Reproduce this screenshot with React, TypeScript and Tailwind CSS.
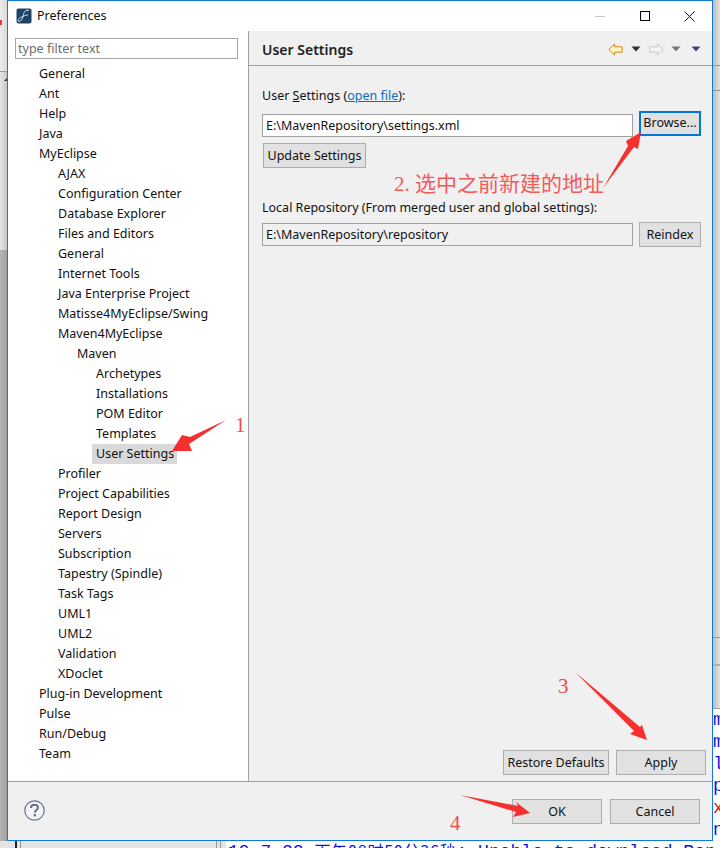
import React from 'react';

const uiFont = { fontFamily: '"Noto Sans", "Open Sans", sans-serif' };

// label + indent level, top to bottom
const treeRows: [string, number][] = [
  ['General', 0],
  ['Ant', 0],
  ['Help', 0],
  ['Java', 0],
  ['MyEclipse', 0],
  ['AJAX', 1],
  ['Configuration Center', 1],
  ['Database Explorer', 1],
  ['Files and Editors', 1],
  ['General', 1],
  ['Internet Tools', 1],
  ['Java Enterprise Project', 1],
  ['Matisse4MyEclipse/Swing', 1],
  ['Maven4MyEclipse', 1],
  ['Maven', 2],
  ['Archetypes', 3],
  ['Installations', 3],
  ['POM Editor', 3],
  ['Templates', 3],
  ['User Settings', 3],
  ['Profiler', 1],
  ['Project Capabilities', 1],
  ['Report Design', 1],
  ['Servers', 1],
  ['Subscription', 1],
  ['Tapestry (Spindle)', 1],
  ['Task Tags', 1],
  ['UML1', 1],
  ['UML2', 1],
  ['Validation', 1],
  ['XDoclet', 1],
  ['Plug-in Development', 0],
  ['Pulse', 0],
  ['Run/Debug', 0],
  ['Team', 0],
];

const indentClass = ['pl-[31px]', 'pl-[50px]', 'pl-[69px]', 'pl-[88px]'];

function Btn({ label, className = '' }: { label: string; className?: string }) {
  return (
    <button className={`flex items-center justify-center pt-[2px] bg-[#e1e1e1] border border-[#adadad] text-[12.5px] text-[#111] ${className}`}>
      {label}
    </button>
  );
}

function Logo() {
  return (
    <svg width="16" height="16" viewBox="0 0 16 16">
      <rect x="0.5" y="0.5" width="15" height="15" rx="2" fill="#1d4468" />
      <path d="M13 2.5C10 1.5 8 3.5 7.5 6.5S6 13 3 13.5C1.5 13.5 2 11 4.5 9.5S10 7 12 7" fill="none" stroke="#e8eef4" strokeWidth="0.9" />
    </svg>
  );
}

function NavArrow({ dir, fill, stroke }: { dir: 'left' | 'right'; fill: string; stroke: string }) {
  return (
    <svg width="15" height="13" viewBox="0 0 15 13" className={dir === 'right' ? '-scale-x-100' : ''}>
      <path d="M0.8 6.5 6.5 1V3.8H14.2V9.2H6.5V12Z" fill={fill} stroke={stroke} strokeWidth="1" />
    </svg>
  );
}

function Tri({ color }: { color: string }) {
  return (
    <svg width="10" height="6" viewBox="0 0 10 6">
      <path d="M0.5 0.5H9.5L5 5.5Z" fill={color} />
    </svg>
  );
}

function Annotations() {
  return (
    <svg width="720" height="848" viewBox="0 0 720 848" className="absolute left-0 top-0 pointer-events-none">
      <polygon points="226,420 190,437 182,435 172,451 192,451 189,444" fill="#f5302e" />
      <polygon points="603,188 628,146 626,141 641,132 638,149 634,147" fill="#f5302e" />
      <polygon points="575,672 640,727 642,725 647,740 630,734 634,731" fill="#f5302e" />
      <polygon points="460,795 518,806 516,802 530,813 513,817 516,812" fill="#f5302e" />
    </svg>
  );
}

function Backdrop() {
  return (
    <>
      {/* stuff of the ide behind the dialog */}
      <div className="absolute left-0 top-0 w-[8px] h-[71px] bg-gradient-to-r from-[#ececec] to-[#d8d8d8]" />
      <div className="absolute left-0 top-[20px] w-[2px] h-[5px] bg-[#e04040]" />
      <div className="absolute left-0 top-[71px] w-[8px] h-px bg-[#9a9a9a]" />
      <div className="absolute left-0 top-[72px] w-[8px] h-[178px] bg-gradient-to-r from-[#e6e6e6] to-[#c4c4c4]" />
      <div className="absolute left-[4px] top-[77px] w-0 h-0 border-l-[4px] border-l-transparent border-b-[4px] border-b-[#333]" />
      <div className="absolute left-0 top-[250px] w-[8px] h-[598px] bg-gradient-to-r from-[#b4b4b4] to-[#a0a0a0]" />
      <div className="absolute left-[713px] top-0 w-[7px] h-[708px] bg-gradient-to-r from-[#bdbdbd] to-[#e2e2e2]" />
      <div className="absolute left-[713px] top-[65px] w-[7px] h-px bg-[#8f8f8f]" />
      <div className="absolute left-[713px] top-[90px] w-[7px] h-px bg-[#8f8f8f]" />
      <div className="absolute left-[713px] top-[637px] w-[7px] h-px bg-[#9a9a9a]" />
      <div className="absolute left-[713px] top-[664px] w-[7px] h-[2px] bg-[#a9b2bc]" />
      <div className="absolute left-[713px] top-[708px] w-[7px] h-[140px] bg-white border-t border-[#a0a0a0] overflow-hidden font-['Liberation_Mono',monospace] text-[18px] leading-[22px] text-[#1414d8]">
        <div className="flex flex-col">
          <span>m</span>
          <span>m</span>
          <span>l</span>
          <span>p</span>
          <span className="text-[#d02020]">x</span>
          <span>n</span>
        </div>
      </div>
      <div className="absolute left-0 top-[841px] w-[226px] h-[7px] bg-[#e4e4e4]" />
      <div className="absolute left-[15px] top-[841px] w-[2px] h-[7px] bg-[#222]" />
      <div className="absolute left-[20px] top-[841px] w-px h-[7px] bg-[#999]" />
      <div className="absolute left-[216px] top-[841px] w-px h-[7px] bg-[#999]" />
      <div className="absolute left-[220px] top-[841px] w-px h-[7px] bg-[#999]" />
      <div className="absolute left-[226px] top-[841px] w-[494px] h-[7px] bg-white overflow-hidden">
        <div className="pl-[2px] whitespace-nowrap text-[18px] leading-[18px] text-[#1414d8] font-['Liberation_Mono','Noto_Sans_CJK_SC',monospace]">
          19.7.22 <span className="text-[16px] tracking-[0.8px] font-['Noto_Sans_CJK_SC',sans-serif]">下午08时50分36秒</span>: Unable to download Rep
        </div>
      </div>
    </>
  );
}

export default function App() {
  return (
    <div className="relative w-[720px] h-[848px] overflow-hidden bg-[#e4e4e4]" style={uiFont}>
      <Backdrop />

      <div className="absolute left-[7px] top-0 w-[706px] h-[841px] flex flex-col border border-[#0f7ad8] bg-white">
        {/* title bar */}
        <div className="h-[30px] flex items-center shrink-0 bg-white">
          <div className="ml-[8px] mr-[5px] flex">
            <Logo />
          </div>
          <span className="text-[12.5px] text-[#111]">Preferences</span>
          <div className="ml-auto flex">
            <div className="w-[45px] h-[30px] flex items-center justify-center">
              <div className="w-[10px] h-px bg-[#c4c4c4]" />
            </div>
            <div className="w-[45px] h-[30px] flex items-center justify-center">
              <div className="w-[10px] h-[10px] border border-black" />
            </div>
            <div className="w-[45px] h-[30px] flex items-center justify-center">
              <svg width="11" height="11" viewBox="0 0 11 11">
                <path d="M0.5 0.5 10.5 10.5M10.5 0.5 0.5 10.5" stroke="#111" strokeWidth="1" />
              </svg>
            </div>
          </div>
        </div>

        <div className="flex flex-1 min-h-0">
          {/* left tree */}
          <div className="w-[241px] shrink-0 bg-white border-r border-[#a0a0a0] flex flex-col">
            <div className="ml-[7px] mt-[7px] w-[223px] h-[21px] border border-[#a6a6a6] flex items-center pl-[2px] pt-[2px] text-[12.5px] text-[#6d6d6d]">
              type filter text
            </div>
            <div className="mt-[5px] flex flex-col">
              {treeRows.map(([label, level], i) => (
                <div key={i} className={`h-5 flex items-center text-[12.5px] text-[#111] whitespace-nowrap ${indentClass[level]}`}>
                  {label === 'User Settings' ? (
                    <span className="-ml-[4px] h-5 w-[85px] pl-[4px] flex items-center bg-[#d9d9d9]">{label}</span>
                  ) : (
                    label
                  )}
                </div>
              ))}
            </div>
          </div>

          {/* right page */}
          <div className="flex-1 min-w-0 bg-[#f0f0f0] flex flex-col">
            <div className="h-[35px] shrink-0 border-b border-[#a0a0a0] flex items-center pt-[2px] pl-[13px] pr-[11px]">
              <span className="text-[14px] font-semibold text-[#222]">User Settings</span>
              <div className="ml-auto flex items-center">
                <NavArrow dir="left" fill="#fff3c4" stroke="#c88a1e" />
                <div className="ml-[8px]"><Tri color="#2f2f2f" /></div>
                <div className="ml-[8px]"><NavArrow dir="right" fill="#f4f4f4" stroke="#c6c6c6" /></div>
                <div className="ml-[7px]"><Tri color="#777" /></div>
                <div className="ml-[10px]"><Tri color="#46407a" /></div>
              </div>
            </div>

            <div className="flex-1 flex flex-col pl-[13px] pr-[11px] text-[12.5px] text-[#111]">
              <div className="mt-[21px] h-[18px] flex items-center">
                <span>
                  User <span className="underline">S</span>ettings (<span className="text-[#0a6fc2] underline">open file</span>):
                </span>
              </div>
              <div className="mt-[9px] flex items-center">
                <div className="w-[371px] h-[23px] bg-white border border-[#a0a0a0] flex items-center pl-[3px] pt-[2px]">
                  E:\MavenRepository\settings.xml
                </div>
                <button className="ml-[6px] -mt-[4px] w-[62px] h-[25px] flex items-center justify-center bg-[#e1e1e1] border-2 border-[#0078d7] text-[12.5px] text-[#111]">
                  Browse...
                </button>
              </div>
              <Btn label="Update Settings" className="mt-[6px] ml-px w-[103px] h-[25px]" />
              <div className="mt-[31px] h-[18px] flex items-center">
                Local Repository (From merged user and global settings):
              </div>
              <div className="mt-[5px] flex items-center">
                <div className="w-[371px] h-[23px] bg-[#f0f0f0] border border-[#a0a0a0] flex items-center pl-[3px] pt-[2px]">
                  E:\MavenRepository\repository
                </div>
                <Btn label="Reindex" className="ml-[6px] w-[62px] h-[25px]" />
              </div>

              <div className="mt-auto mb-[6px] flex justify-end -mr-[5px] gap-[7px]">
                <Btn label="Restore Defaults" className="w-[106px] h-[25px]" />
                <Btn label="Apply" className="w-[90px] h-[25px]" />
              </div>
            </div>
          </div>
        </div>

        {/* footer */}
        <div className="h-[59px] shrink-0 bg-[#f0f0f0] border-t border-[#a0a0a0] flex items-center pl-[16px] pr-[12px]">
          <svg width="21" height="21" viewBox="0 0 21 21" className="-mt-[2px]">
            <circle cx="10.5" cy="10.5" r="9.7" fill="#f4f5f7" stroke="#5f7190" strokeWidth="1.2" />
            <path d="M7 8C7 5.6 8.8 4.8 10.5 4.8S14 5.8 14 7.8C14 10 11 10 10.8 12.6" fill="none" stroke="#5f6f8c" strokeWidth="2" />
            <rect x="9.7" y="14" width="2.2" height="2.4" fill="#5f6f8c" />
          </svg>
          <div className="ml-auto flex gap-[8px]">
            <Btn label="OK" className="w-[90px] h-[25px]" />
            <Btn label="Cancel" className="w-[90px] h-[25px]" />
          </div>
        </div>
      </div>

      <Annotations />

      {/* hand written notes on the screenshot */}
      <span className="absolute left-[235px] top-[413px] text-[21px] leading-[24px] text-[#f04a4a] font-['Liberation_Serif',serif]">1</span>
      <span className="absolute left-[394px] top-[172px] text-[21px] leading-[24px] text-[#f45a5a] whitespace-nowrap font-['Liberation_Serif','Noto_Sans_CJK_SC',serif]">2. 选中之前新建的地址</span>
      <span className="absolute left-[558px] top-[674px] text-[21px] leading-[24px] text-[#f04a4a] font-['Liberation_Serif',serif]">3</span>
      <span className="absolute left-[450px] top-[811px] text-[21px] leading-[24px] text-[#f04a4a] font-['Liberation_Serif',serif]">4</span>
    </div>
  );
}
